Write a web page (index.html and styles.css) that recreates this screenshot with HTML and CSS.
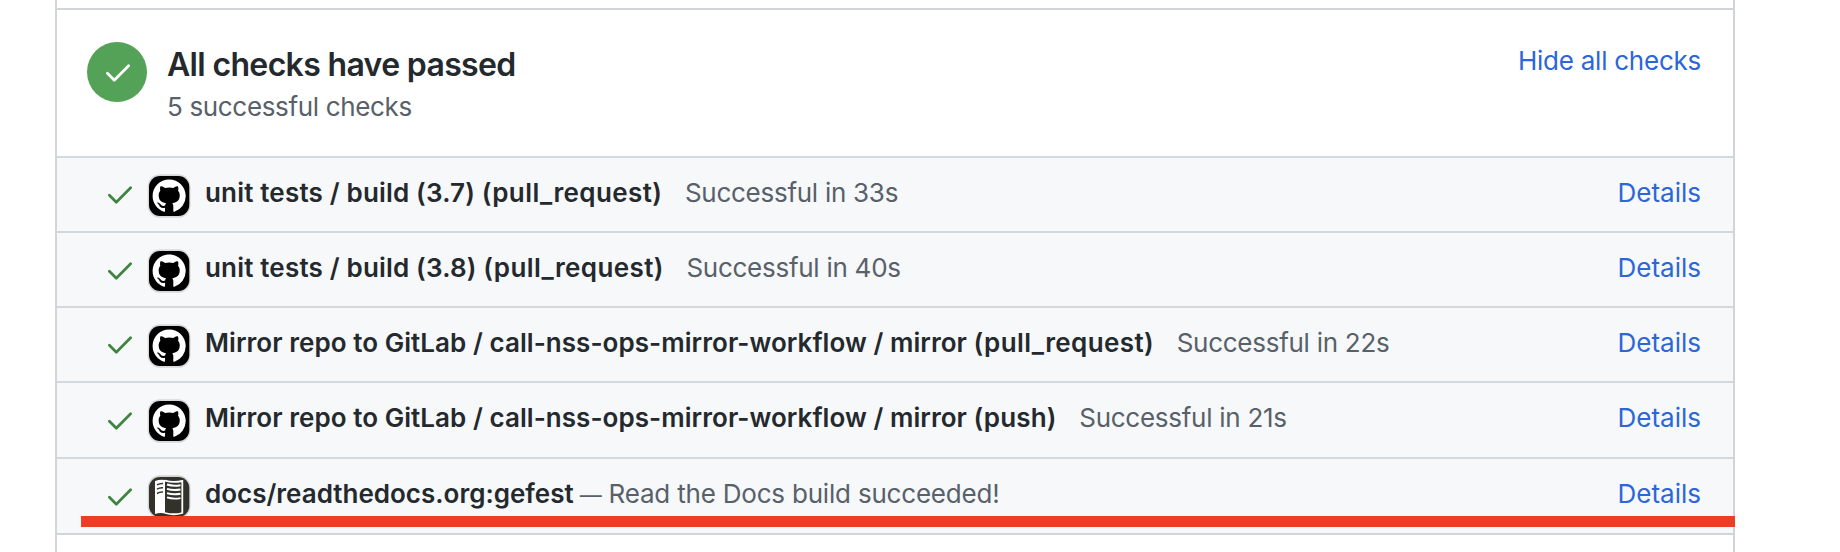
FILE: index.html
```html
<!DOCTYPE html>
<html lang="en">
<head>
<meta charset="utf-8">
<title>Checks</title>
<link rel="stylesheet" href="styles.css">
</head>
<body>
<svg class="defs" width="0" height="0" aria-hidden="true">
  <symbol id="check" viewBox="0 0 24 18"><path d="M1.400 9.300 8.300 16.300 22.600 1.700" fill="none" stroke="currentColor" stroke-width="2.700" stroke-linecap="round" stroke-linejoin="round"/></symbol>
  <symbol id="github" viewBox="0 0 44 44">
    <rect x="0.700" y="0.300" width="42.800" height="43.500" rx="12.500" fill="#d8d8da"/>
    <rect x="2" y="2" width="40.300" height="40" rx="11" fill="#000"/>
    <g transform="translate(5.600 5.400) scale(2.070)"><path fill="#fff" d="M8 0C3.580 0 0 3.580 0 8c0 3.540 2.290 6.530 5.470 7.590.4.07.55-.17.55-.38 0-.19-.01-.82-.01-1.490-2.010.37-2.530-.49-2.690-.94-.09-.23-.48-.94-.82-1.130-.28-.15-.68-.52-.01-.53.63-.01 1.080.58 1.230.82.72 1.210 1.870.87 2.330.66.07-.52.28-.87.51-1.070-1.780-.2-3.640-.89-3.640-3.950 0-.87.31-1.590.82-2.150-.08-.2-.36-1.020.08-2.120 0 0 .67-.21 2.200.82.64-.18 1.320-.27 2-.27s1.360.09 2 .27c1.530-1.040 2.200-.82 2.200-.82.44 1.100.16 1.920.08 2.120.51.56.82 1.270.82 2.150 0 3.070-1.870 3.750-3.650 3.950.29.25.54.73.54 1.480 0 1.070-.01 1.930-.01 2.200 0 .21.15.46.55.38A8.010 8.010 0 0 0 16 8c0-4.420-3.580-8-8-8z"/></g>
  </symbol>
  <symbol id="docs" viewBox="0 0 44 44">
    <rect x="0.700" y="0.300" width="42.800" height="43.500" rx="12.500" fill="#d3d4d8"/>
    <rect x="2" y="2" width="40.300" height="40" rx="11" fill="#32322a"/>
    <path d="M8 6Q13 4.300 18 5V38.500Q13 37.500 8 39Z" fill="#fff"/>
    <path d="M18 5.600Q26 8 35.300 6V38Q27 40.500 18 38" fill="none" stroke="#fff" stroke-width="1.800"/>
    <path d="M10 9.900Q12.500 8.300 16 8.500M10 14.200Q12.500 12.600 16 12.800M10 18.500Q12.500 16.900 16 17.100" fill="none" stroke="#32322a" stroke-width="1.500"/>
    <path d="M20 9.500Q26 11.500 33.500 10.200M20 13.800Q26 15.800 33.500 14.500M20 18.100Q26 20.100 33.500 18.800M20 22.400Q26 24.400 33.500 23.100" fill="none" stroke="#fff" stroke-width="1.900"/>
  </symbol>
</svg>
<main class="panel">
  <header class="summary">
    <span class="badge"><svg class="tick"><use href="#check"/></svg></span>
    <div class="heading"><h1 class="title">All checks have passed</h1><p class="subtitle">5 successful checks</p></div>
    <a class="link toggle">Hide all checks</a>
  </header>
  <section class="list">
    <div class="row"><svg class="tick"><use href="#check"/></svg><svg class="avatar"><use href="#github"/></svg><strong class="name"><span class="build">unit tests / build (3.7) </span><span class="event">(pull_request)</span></strong><span class="note">Successful in 33s</span><a class="link">Details</a></div>
    <div class="row low"><svg class="tick"><use href="#check"/></svg><svg class="avatar"><use href="#github"/></svg><strong class="name"><span class="build">unit tests / build (3.8) </span><span class="event">(pull_request)</span></strong><span class="note">Successful in 40s</span><a class="link">Details</a></div>
    <div class="row"><svg class="tick"><use href="#check"/></svg><svg class="avatar"><use href="#github"/></svg><strong class="name"><span class="mirror">Mirror repo to GitLab / call-nss-ops-mirror-workflow / mirror </span><span class="event">(pull_request)</span></strong><span class="note">Successful in 22s</span><a class="link">Details</a></div>
    <div class="row tall low"><svg class="tick"><use href="#check"/></svg><svg class="avatar"><use href="#github"/></svg><strong class="name"><span class="mirror">Mirror repo to GitLab / call-nss-ops-mirror-workflow / mirror </span><span class="build">(push)</span></strong><span class="note">Successful in 21s</span><a class="link">Details</a></div>
    <div class="row tall low"><svg class="tick"><use href="#check"/></svg><svg class="avatar"><use href="#docs"/></svg><strong class="name">docs/readthedocs.org:gefest</strong><span class="note inline"><span class="dash">—</span> Read the Docs build succeeded!</span><a class="link">Details</a></div>
  </section>
  <div class="underline"></div>
</main>
</body>
</html>
```
FILE: styles.css
```css
* { box-sizing: border-box; }
body { margin: 0; background: #fff; overflow: hidden; font: 26px/40px Inter, "Liberation Sans", sans-serif; color: #24292e; }
.defs { position: absolute; }
.panel { position: relative; width: 1680px; height: 552px; margin-left: 55px; padding-top: 8px; border: solid #d1d5da; border-width: 0 2px; }
.summary { display: flex; height: 148px; border-top: 2px solid #d1d5da; padding: 32px 32px 0 30px; }
.badge { display: flex; align-items: center; justify-content: center; width: 60px; height: 60px; padding: 1px 0 0 2px; border-radius: 50%; background: #54a257; color: #fff; }
.tick { display: block; flex: none; width: 24px; height: 18px; }
.heading { margin-left: 20px; }
.title { margin: 2px 0 0; font-size: 32px; line-height: 42px; font-weight: 630; letter-spacing: -0.66px; }
.subtitle { margin: 1px 0 0; color: #586069; letter-spacing: -0.34px; }
.link { margin-left: auto; color: #2c66d8; white-space: nowrap; }
.toggle { margin-top: -1px; letter-spacing: -0.25px; }
.list { border-bottom: 2px solid #d1d5da; }
.row { display: flex; height: 75px; padding: 15px 32px 0 51px; border-top: 2px solid #d1d8de; background: #f6f8fa; white-space: nowrap; }
.tall { height: 76px; }
.row .tick { margin-top: 12.500px; color: #3f8440; }
.row.low .tick { margin-top: 13.500px; }
.avatar { display: block; flex: none; width: 44px; height: 44px; margin: 1px 0 0 15px; }
.name { margin-left: 14px; font-weight: 600; white-space: pre; }
.build { letter-spacing: 0.18px; }
.mirror { letter-spacing: 0.055px; }
.event { letter-spacing: 0.4px; }
.note { margin-left: 22.500px; color: #586069; letter-spacing: -0.27px; }
.inline { margin-left: 6px; letter-spacing: -0.2px; }
.dash { font-size: 22px; line-height: 1; }
.underline { position: absolute; left: 24px; right: -2px; top: 516px; height: 10.500px; background: #eb3f25; }
```
